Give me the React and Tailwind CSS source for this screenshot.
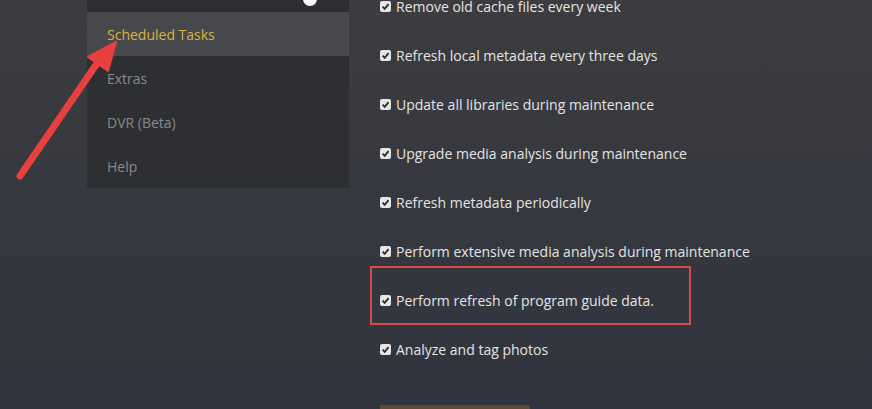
import React from 'react'

const tasks = [
  'Remove old cache files every week',
  'Refresh local metadata every three days',
  'Update all libraries during maintenance',
  'Upgrade media analysis during maintenance',
  'Refresh metadata periodically',
  'Perform extensive media analysis during maintenance',
  'Perform refresh of program guide data.',
  'Analyze and tag photos',
]

const menu = ['Extras', 'DVR (Beta)', 'Help']

function Check() {
  return (
    <span className="flex h-[11px] w-[11px] shrink-0 items-center justify-center rounded-[2px] bg-[#e6e6e6]">
      <svg width="9" height="9" viewBox="0 0 10 10">
        <path d="M1.8 5.2 L4.1 7.6 L8.4 2.3" fill="none" stroke="#2b2c30" strokeWidth="2" />
      </svg>
    </span>
  )
}

export default function App() {
  return (
    <div
      className="relative h-[409px] w-[872px] overflow-hidden bg-gradient-to-b from-[#3c3c40] to-[#30343e]"
      style={{ fontFamily: '"Open Sans", "Noto Sans", sans-serif' }}
    >
      <div className="flex">
        {/* sidebar */}
        <div className="ml-[87px] w-[262px]">
          <div className="relative h-[12px] bg-[#2d2e32]">
            <span className="absolute left-[216px] top-[-8px] h-[14px] w-[14px] rounded-full bg-white" />
          </div>
          <div className="bg-[#2e2f33]">
            <div className="flex h-[44px] items-center bg-[#47484c] pl-[20px] text-[14px] text-[#dcb43a]">
              Scheduled Tasks
            </div>
            {menu.map(m => (
              <div key={m} className="flex h-[44px] items-center pl-[20px] text-[14px] text-[#88898c]">
                {m}
              </div>
            ))}
          </div>
        </div>

        {/* task list */}
        <div className="ml-[31px] -mt-[4px] flex flex-col gap-[29px]">
          {tasks.map(t => (
            <div key={t} className="flex h-[20px] items-center gap-[5px] text-[14px] text-[#e4e4e4]">
              <Check />
              <span>{t}</span>
            </div>
          ))}
          <div className="mt-[17px] h-[20px] w-[150px] rounded-[2px] bg-[#5f4c34]" />
        </div>
      </div>

      {/* annotation box */}
      <div className="absolute left-[370px] top-[266px] h-[59px] w-[321px] border-[2px] border-[#d8494a]" />

      {/* annotation arrow */}
      <svg className="absolute left-0 top-0" width="140" height="200" viewBox="0 0 140 200">
        <line x1="20" y1="176" x2="98" y2="62" stroke="#e8403e" strokeWidth="7" strokeLinecap="round" />
        <polygon points="116,42 88,57 108,71" fill="#e8403e" stroke="#e8403e" strokeWidth="2" strokeLinejoin="round" />
      </svg>
    </div>
  )
}
